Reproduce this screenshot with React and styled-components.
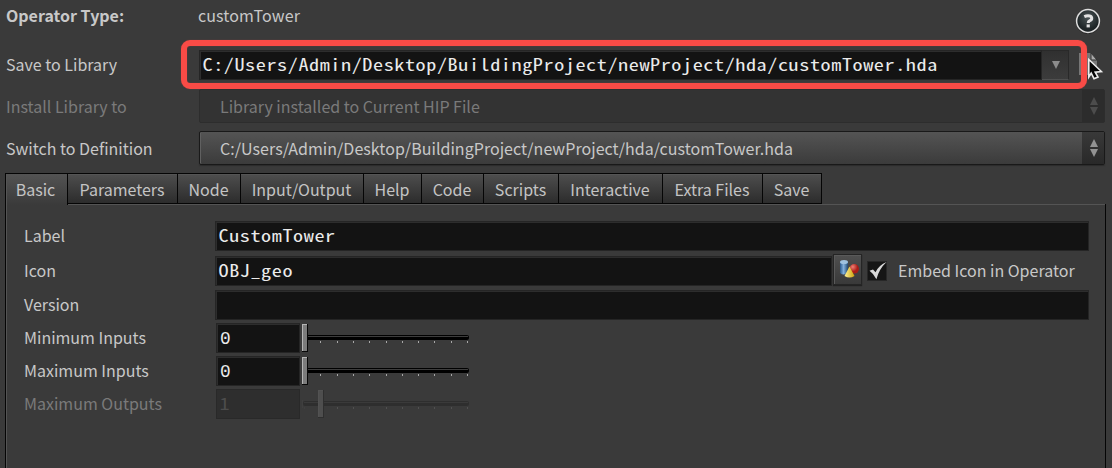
import React from "react";
import styled, { createGlobalStyle, css } from "styled-components";

const Global = createGlobalStyle`
  * { box-sizing: border-box; }
  body { margin: 0; background: #3a3a3a; overflow: hidden; }
`;

const sans = `"Noto Sans CJK SC", "Noto Sans", sans-serif`;
const mono = `"Noto Sans Mono CJK SC", "DejaVu Sans Mono", monospace`;

const Page = styled.main`
  width: 1112px;
  height: 468px;
  display: flex;
  flex-direction: column;
  background: #3a3a3a;
  color: #c8c8c8;
  font: 16px/30px ${sans};
  white-space: nowrap;
  overflow: hidden;
`;

const Header = styled.section`
  display: flex;
  flex-direction: column;
  height: 173px;
  padding: 1px 6px 0;
`;

const HeaderRow = styled.div`
  display: flex;
  position: relative;
  height: ${(p) => p.$height}px;
  margin-bottom: ${(p) => p.$gap}px;
`;

const RowLabel = styled.label`
  width: ${(p) => p.$width || 193}px;
  flex: none;
  line-height: ${(p) => p.$line || 28}px;
  font-weight: ${(p) => (p.$bold ? 700 : 400)};
  color: ${(p) => (p.$dim ? "#7a7a7a" : "#c8c8c8")};
`;

const TypeName = styled.span`
  flex: 1;
  margin-left: -1px;
  line-height: 28px;
  letter-spacing: 0.12px;
`;

const HelpButton = styled.button`
  width: 26px;
  height: 26px;
  padding: 0;
  margin: 7px 5px 0 0;
  border: 0;
  background: none;
`;

const FieldBox = styled.div`
  width: ${(p) => p.$width}px;
  height: 30px;
  flex: none;
  border: 1px solid #252525;
  box-shadow: inset 1px 1px 0 #2d2d2d;
  background: #131313;
  color: #ebebeb;
  font: 16.8px/26px ${mono};
  padding-left: 2px;
  ${(p) =>
    p.$dim &&
    css`
      border-color: #292929;
      background: #2e2e2e;
      box-shadow: none;
      color: #4c4c4c;
    `}
`;

const FieldText = styled.span`
  display: inline-block;
  padding-left: 0.4px;
  letter-spacing: 0.49px;
  transform: scaleX(1.2);
  transform-origin: 0 50%;
`;

const FieldNumber = styled.span`
  display: block;
  padding-left: 1px;
  font: 17.8px/30px "Liberation Mono", monospace;
`;

const DropButton = styled.button`
  width: 27px;
  height: 30px;
  padding: 0 0 0 2px;
  display: grid;
  place-items: center;
  border: 1px solid #292929;
  border-left: 0;
  border-bottom-color: #505050;
  background: linear-gradient(#303030, #3c3c3c);
`;

const Highlight = styled.div`
  position: absolute;
  left: 175px;
  top: -10px;
  width: 906px;
  height: 49px;
  border: 6px solid #f94b46;
  border-radius: 9px;
  box-shadow: 0 0 1px #a04040, inset 0 0 1px #a04040;
`;

const PickerIcon = styled.svg`
  position: absolute;
  left: 1072px;
  top: 0;
`;

const Select = styled.div`
  display: flex;
  width: 906px;
  height: 34px;
  border: 1px solid ${(p) => (p.$dim ? "#2d2d2d" : "#191919")};
  border-radius: 2px;
  background: ${(p) => (p.$dim ? "#333333" : "linear-gradient(#545454, #3b3b3b)")};
  box-shadow: ${(p) => (p.$dim ? "none" : "inset 1px 0 0 #606060, 0 1px 1px #2c2c2c")};
  color: ${(p) => (p.$dim ? "#7a7a7a" : "#c8c8c8")};
  line-height: 33px;
`;

const SelectText = styled.span`
  flex: 1;
  padding-left: 20px;
  letter-spacing: ${(p) => p.$track || 0}px;
`;

const Stepper = styled.span`
  width: 22px;
  padding-left: 2px;
  display: grid;
  place-items: center;
  background: ${(p) => (p.$dim ? "#2c2c2c" : "linear-gradient(#393939, #292929)")};
`;

const TabBar = styled.nav`
  display: flex;
  height: 31px;
  margin-left: 5px;
  border-left: 1px solid #050505;
  position: relative;
  z-index: 1;
`;

const Tab = styled.button`
  width: ${(p) => p.$width}px;
  height: ${(p) => (p.$active ? 32 : 31)}px;
  padding: ${(p) => (p.$active ? "0 2px 1px 0" : "0 1px 0 0")};
  border: 0 solid #050505;
  border-top-width: 1px;
  border-right-width: 1px;
  border-bottom-width: ${(p) => (p.$active ? 0 : 1)}px;
  background: ${(p) => (p.$active ? "linear-gradient(#535353, #3a3a3a)" : "linear-gradient(#4e4e4e, #2c2c2c)")};
  box-shadow: ${(p) => (p.$active ? "inset 1px 0 0 #555" : "inset 0 1px 0 #555")};
  color: #c4c4c4;
  font: 16px/30px ${sans};
  text-align: center;
`;

const Panel = styled.section`
  width: 1101px;
  height: 264px;
  margin-left: 5px;
  border-left: 1px solid #050505;
  border-right: 1px solid #050505;
  box-shadow: inset 1px 1px 0 #545454;
  padding: 17px 0 0 18px;
  display: flex;
  flex-direction: column;
`;

const ParamRow = styled.div`
  display: flex;
  height: 30px;
  margin-bottom: ${(p) => p.$gap || 3}px;
`;

const IconButton = styled.button`
  width: 29px;
  height: 31px;
  margin: -2px 5px 0 1px;
  padding: 0 0 0 2px;
  display: grid;
  place-items: center;
  border: 1px solid #252525;
  box-shadow: inset 1px 1px 0 #5a5a5a, 0 1px 1px #222;
  background: linear-gradient(#505050, #393939);
`;

const CheckBox = styled.span`
  width: 20px;
  height: 20px;
  margin: 5px 11px 0 0;
  border: 1px solid #272727;
  background: #151515;
`;

const CheckMark = styled.svg`
  display: block;
  overflow: visible;
`;

const SliderSvg = styled.svg`
  margin-left: 2px;
  opacity: ${(p) => (p.$dim ? 0.2 : 1)};
`;

const ticks = [20, 37, 53, 69, 86, 102, 118, 134, 151, 167];

function Field({ width, dim, children }) {
  return (
    <FieldBox $width={width} $dim={dim}>
      <FieldText>{children}</FieldText>
    </FieldBox>
  );
}

function NumberField({ value, dim }) {
  return (
    <FieldBox $width={84} $dim={dim}>
      {value === 0 ? <FieldNumber>0</FieldNumber> : <FieldText>{value}</FieldText>}
    </FieldBox>
  );
}

function Slider({ handle, dim }) {
  return (
    <SliderSvg $dim={dim} width="170" height="30" viewBox="0 0 170 30">
      <rect x="1" y="12" width="166" height="5" rx="2" fill="#000" />
      <path d="M2 13.5H166" stroke="#3d3d3d" />
      {dim && <path d="M2.5 18v2M.5 11v8" stroke="#555" />}
      {ticks.map((x) => (
        <rect key={x} x={x - 2} y="18" width="1" height="2" fill="#a8a8a8" />
      ))}
      <rect x={handle} y="1" width="6" height="28" fill="#080808" />
      <rect x={handle} y="1" width="5" height="27" fill="#b5b5b5" />
      <rect x={handle + 1} y="2" width="4" height="26" fill={dim ? "#a0a0a0" : "#7c7c7c"} />
    </SliderSvg>
  );
}

function Arrows({ dim }) {
  return (
    <svg width="10" height="18" viewBox="0 0 10 18" fill={dim ? "#4c4c4c" : "#929292"}>
      <path d="M5 0L9 8H1ZM1 10H9L5 18Z" />
    </svg>
  );
}

const tabs = [
  ["Basic", 62], ["Parameters", 110], ["Node", 63], ["Input/Output", 123], ["Help", 58],
  ["Code", 62], ["Scripts", 75], ["Interactive", 104], ["Extra Files", 100], ["Save", 59],
];

export default function App() {
  return (
    <Page>
      <Global />
      <Header>
        <HeaderRow $height={30} $gap={19}>
          <RowLabel $bold>Operator Type:</RowLabel>
          <TypeName>customTower</TypeName>
          <HelpButton aria-label="Help">
            <svg width="26" height="28" viewBox="0 0 26 28">
              <defs>
                <radialGradient id="help" cy=".35">
                  <stop stopColor="#4b5557" />
                  <stop offset="1" stopColor="#1e2527" />
                </radialGradient>
              </defs>
              <circle cx="13" cy="14" r="12" fill="#292929" />
              <circle cx="13" cy="13" r="11.4" fill="url(#help)" stroke="#dedede" strokeWidth="1.5" />
              <path d="M9.3 8.7Q11.2 7.8 13 7.8C17.6 7.8 17.6 11.4 14.8 12.7Q13.2 13.4 13.2 15.1" fill="none" stroke="#e2e2e2" strokeWidth="3" />
              <rect x="11.6" y="16.4" width="3.2" height="3" fill="#e2e2e2" />
            </svg>
          </HelpButton>
        </HeaderRow>
        <HeaderRow $height={30} $gap={9}>
          <RowLabel>Save to Library</RowLabel>
          <Field width={843}>C:/Users/Admin/Desktop/BuildingProject/newProject/hda/customTower.hda</Field>
          <DropButton aria-label="Recent libraries">
            <svg width="10" height="9" viewBox="0 0 10 9"><path d="M1 0H9L5 8Z" fill="#8c8c8c" /></svg>
          </DropButton>
          <PickerIcon width="34" height="34" viewBox="0 0 34 34">
            <path d="M1 3H13L19 10V25H1Z" fill="#777" />
            <path d="M13 3V10H19Z" fill="#aaa" stroke="#333" />
          </PickerIcon>
          <Highlight />
          <PickerIcon width="34" height="34" viewBox="0 0 34 34">
            <path d="M10.8 9.5L23.4 21.5L17.2 22.1L20 27L16 28.7L13.2 23.2L10.8 27Z" fill="#050505" stroke="#ececec" strokeWidth="1.6" />
          </PickerIcon>
        </HeaderRow>
        <HeaderRow $height={34} $gap={8}>
          <RowLabel $dim $line={35}>Install Library to</RowLabel>
          <Select $dim>
            <SelectText>Library installed to Current HIP File</SelectText>
            <Stepper $dim><Arrows dim /></Stepper>
          </Select>
        </HeaderRow>
        <HeaderRow $height={34} $gap={0}>
          <RowLabel $line={35}>Switch to Definition</RowLabel>
          <Select>
            <SelectText $track={0.036}>C:/Users/Admin/Desktop/BuildingProject/newProject/hda/customTower.hda</SelectText>
            <Stepper><Arrows /></Stepper>
          </Select>
        </HeaderRow>
      </Header>
      <TabBar>
        {tabs.map(([name, width], i) => (
          <Tab key={name} $width={width} $active={i === 0}>{name}</Tab>
        ))}
      </TabBar>
      <Panel>
        <ParamRow $gap={5}>
          <RowLabel $width={191}>Label</RowLabel>
          <Field width={874}>CustomTower</Field>
        </ParamRow>
        <ParamRow $gap={4}>
          <RowLabel $width={191}>Icon</RowLabel>
          <Field width={617}>OBJ_geo</Field>
          <IconButton aria-label="Choose icon">
            <svg width="20" height="21" viewBox="0 0 20 21">
              <defs>
                <linearGradient id="blue"><stop stopColor="#28588b" /><stop offset=".45" stopColor="#84b1dc" /><stop offset="1" stopColor="#204870" /></linearGradient>
                <linearGradient id="gold"><stop stopColor="#fff39a" /><stop offset="1" stopColor="#cda20a" /></linearGradient>
                <radialGradient id="red" cx=".35" cy=".3"><stop stopColor="#ef8175" /><stop offset="1" stopColor="#a91c17" /></radialGradient>
              </defs>
              <path d="M1 3V14Q4.5 17 9 14V3Z" fill="url(#blue)" />
              <ellipse cx="5" cy="3" rx="4" ry="2" fill="#9fc2df" />
              <circle cx="15.2" cy="9.8" r="4.8" fill="url(#red)" />
              <path d="M10.5 7.5L5.5 17Q10.5 20 15.5 17Z" fill="url(#gold)" />
            </svg>
          </IconButton>
          <CheckBox>
            <CheckMark width="18" height="18" viewBox="0 0 18 18">
              <path d="M1.5 8.8L5 7.5L7.5 10.2Q11 3 18.5 0Q11 7 8.4 17.3Q6 12 1.5 8.8Z" fill="#d8d8d8" />
            </CheckMark>
          </CheckBox>
          <RowLabel $width={180}>Embed Icon in Operator</RowLabel>
        </ParamRow>
        <ParamRow>
          <RowLabel $width={191}>Version</RowLabel>
          <Field width={874} />
        </ParamRow>
        <ParamRow>
          <RowLabel $width={192}>Minimum Inputs</RowLabel>
          <NumberField value={0} />
          <Slider handle={0} />
        </ParamRow>
        <ParamRow>
          <RowLabel $width={192}>Maximum Inputs</RowLabel>
          <NumberField value={0} />
          <Slider handle={0} />
        </ParamRow>
        <ParamRow>
          <RowLabel $width={192} $dim>Maximum Outputs</RowLabel>
          <NumberField value={1} dim />
          <Slider handle={16} dim />
        </ParamRow>
      </Panel>
    </Page>
  );
}
